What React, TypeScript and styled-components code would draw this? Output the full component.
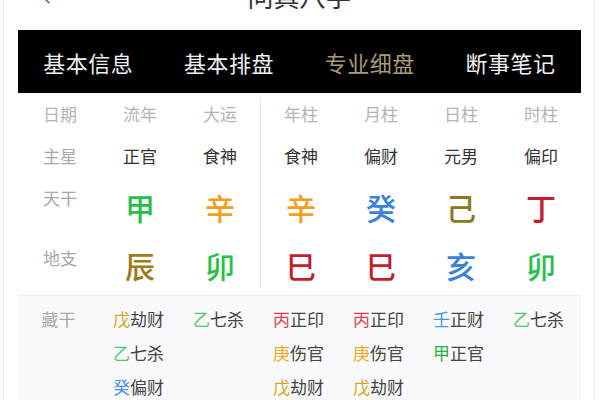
import React from "react";
import styled, { createGlobalStyle } from "styled-components";

const Global = createGlobalStyle`
  html, body { margin: 0; padding: 0; background: #fff; }
  body { font-family: "Noto Sans CJK SC", "Noto Sans", sans-serif; }
`;

const Frame = styled.div`
  width: 592px;
  height: 400px;
  margin: 0 4px 0 3px;
  border-left: 1px solid #ececec;
  border-right: 1px solid #ececec;
  box-sizing: border-box;
  overflow: hidden;
  padding: 0 13px 0 14px;
  background: #fff;
`;

const Header = styled.div`
  height: 30px;
  display: flex;
  align-items: flex-end;
  justify-content: center;
  position: relative;
  overflow: hidden;
`;

const Back = styled.span`
  position: absolute;
  left: 24px;
  bottom: 20px;
  font-size: 24px;
  line-height: 24px;
  color: #333;
  font-family: "DejaVu Sans", sans-serif;
  font-weight: 200;
`;

const Title = styled.div`
  font-size: 26px;
  line-height: 26px;
  color: #333;
  margin-bottom: 21px;
`;

const TabBar = styled.div`
  height: 63px;
  background: #000;
  display: grid;
  grid-template-columns: repeat(4, 1fr);
  align-items: center;
`;

const Tab = styled.div<{ $active?: boolean }>`
  text-align: center;
  font-size: 22px;
  color: ${(p) => (p.$active ? "#a99c7a" : "#f0f0f0")};
  letter-spacing: 0.5px;
`;

const Upper = styled.div`
  display: flex;
  padding-left: 2px;
`;

const Group = styled.div`
  display: flex;
`;

const Divider = styled.div`
  width: 1px;
  background: #e6e6e6;
  margin: 5px 0 5px 0;
`;

const Column = styled.div`
  width: 80px;
  display: flex;
  flex-direction: column;
`;

const Cell = styled.div<{ $h: number; $top?: boolean }>`
  height: ${(p) => p.$h}px;
  display: flex;
  justify-content: center;
  align-items: ${(p) => (p.$top ? "flex-start" : "center")};
  padding-top: ${(p) => (p.$top ? "8px" : "0")};
  box-sizing: border-box;
`;

const Head = styled.span`
  font-size: 17px;
  color: #b4b4b4;
`;

const Label = styled.span`
  font-size: 17px;
  color: #a8a8a8;
`;

const Star = styled.span`
  font-size: 17px;
  color: #333;
`;

const Big = styled.span<{ $c: string }>`
  font-size: 30px;
  font-weight: 500;
  color: ${(p) => p.$c};
`;

const Lower = styled.div`
  background: #f9f9fb;
  border-top: 1px solid #eeeeee;
  margin-top: 2px;
  padding: 6px 0 0 2px;
  display: flex;
  height: 120px;
`;

const HiddenCol = styled.div`
  width: 80px;
  display: flex;
  flex-direction: column;
  align-items: center;
`;

const HiddenItem = styled.div`
  height: 34px;
  line-height: 34px;
  font-size: 17px;
  color: #444;
  margin-right: 3px;
`;

const Stem = styled.span<{ $c: string }>`
  color: ${(p) => p.$c};
`;

const C = {
  green: "#27c04a",
  orange: "#f0a020",
  blue: "#3b82d6",
  olive: "#8a7a1e",
  red: "#c21f2c",
  brown: "#9c7c1c",
};

const H = {
  wu: "#d4a828",
  yi: "#4cc474",
  gui: "#4a92e4",
  bing: "#e6404e",
  geng: "#e8a820",
  ren: "#4c94e0",
  jia: "#1fb444",
};

type Pillar = {
  head: string;
  star: string;
  stem: [string, string];
  branch: [string, string];
  hidden: [string, string, string][];
};

const left: Pillar[] = [
  {
    head: "流年",
    star: "正官",
    stem: ["甲", C.green],
    branch: ["辰", C.brown],
    hidden: [
      ["戊", "劫财", H.wu],
      ["乙", "七杀", H.yi],
      ["癸", "偏财", H.gui],
    ],
  },
  {
    head: "大运",
    star: "食神",
    stem: ["辛", C.orange],
    branch: ["卯", C.green],
    hidden: [["乙", "七杀", H.yi]],
  },
];

const right: Pillar[] = [
  {
    head: "年柱",
    star: "食神",
    stem: ["辛", C.orange],
    branch: ["巳", C.red],
    hidden: [
      ["丙", "正印", H.bing],
      ["庚", "伤官", H.geng],
      ["戊", "劫财", H.wu],
    ],
  },
  {
    head: "月柱",
    star: "偏财",
    stem: ["癸", C.blue],
    branch: ["巳", C.red],
    hidden: [
      ["丙", "正印", H.bing],
      ["庚", "伤官", H.geng],
      ["戊", "劫财", H.wu],
    ],
  },
  {
    head: "日柱",
    star: "元男",
    stem: ["己", C.olive],
    branch: ["亥", C.blue],
    hidden: [
      ["壬", "正财", H.ren],
      ["甲", "正官", H.jia],
    ],
  },
  {
    head: "时柱",
    star: "偏印",
    stem: ["丁", C.red],
    branch: ["卯", C.green],
    hidden: [["乙", "七杀", H.yi]],
  },
];

const PillarColumn = ({ p }: { p: Pillar }) => (
  <Column>
    <Cell $h={40}>
      <Head>{p.head}</Head>
    </Cell>
    <Cell $h={44}>
      <Star>{p.star}</Star>
    </Cell>
    <Cell $h={60}>
      <Big $c={p.stem[1]}>{p.stem[0]}</Big>
    </Cell>
    <Cell $h={56}>
      <Big $c={p.branch[1]}>{p.branch[0]}</Big>
    </Cell>
  </Column>
);

const HiddenColumn = ({ p }: { p: Pillar }) => (
  <HiddenCol>
    {p.hidden.map(([s, t, c], i) => (
      <HiddenItem key={i}>
        <Stem $c={c}>{s}</Stem>
        {t}
      </HiddenItem>
    ))}
  </HiddenCol>
);

export default function App() {
  const all = [...left, ...right];
  return (
    <>
      <Global />
      <Frame>
        <Header>
          <Back>‹</Back>
          <Title>问真八字</Title>
        </Header>
        <TabBar>
          <Tab>基本信息</Tab>
          <Tab>基本排盘</Tab>
          <Tab $active>专业细盘</Tab>
          <Tab>断事笔记</Tab>
        </TabBar>
        <Upper>
          <Group>
            <Column>
              <Cell $h={40}>
                <Head>日期</Head>
              </Cell>
              <Cell $h={44}>
                <Label>主星</Label>
              </Cell>
              <Cell $h={60} $top>
                <Label>天干</Label>
              </Cell>
              <Cell $h={56} $top>
                <Label>地支</Label>
              </Cell>
            </Column>
            {left.map((p) => (
              <PillarColumn key={p.head} p={p} />
            ))}
          </Group>
          <Divider />
          <Group>
            {right.map((p) => (
              <PillarColumn key={p.head} p={p} />
            ))}
          </Group>
        </Upper>
        <Lower>
          <HiddenCol>
            <HiddenItem>
              <Label>藏干</Label>
            </HiddenItem>
          </HiddenCol>
          {all.map((p) => (
            <HiddenColumn key={p.head} p={p} />
          ))}
        </Lower>
      </Frame>
    </>
  );
}
